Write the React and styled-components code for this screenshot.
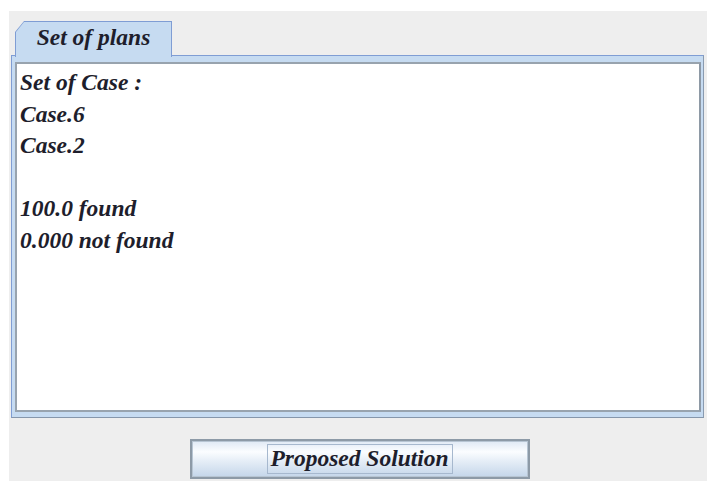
import React from "react";
import styled, { createGlobalStyle } from "styled-components";

const serif = `"Liberation Serif", "DejaVu Serif", "Times New Roman", serif`;

const GlobalStyle = createGlobalStyle`
  html, body {
    margin: 0;
    padding: 0;
    background: #ffffff;
  }
  body {
    font-family: ${serif};
  }
`;

const Window = styled.div`
  margin: 11px 0 0 9px;
  height: 470px;
  background: #eeeeee;
  display: flex;
  flex-direction: column;
  overflow: hidden;
`;

const TabRow = styled.div`
  display: flex;
  padding: 10px 0 0 6px;
  position: relative;
  z-index: 2;
  margin-bottom: -2px;
`;

// outer shape gives the border colour, inner face sits 1px inside it
const TabEdge = styled.div`
  background: #7f9dd4;
  padding: 1px 1px 0 1px;
  clip-path: polygon(9px 0, 100% 0, 100% 100%, 0 100%, 0 11px);
`;

const TabFace = styled.div`
  background: #c6dbf1;
  height: 35px;
  width: 155px;
  box-sizing: border-box;
  clip-path: polygon(8px 0, 100% 0, 100% 100%, 0 100%, 0 10px);
  display: flex;
  align-items: center;
  justify-content: center;
  font-family: ${serif};
  font-size: 23.5px;
  font-weight: bold;
  font-style: italic;
  color: #1e1e2c;
  padding-bottom: 5px;
`;

const Panel = styled.div`
  margin: 0 3px 0 2px;
  height: 363px;
  box-sizing: border-box;
  border-style: solid;
  border-width: 1px;
  border-color: #7f9dd4 #8a9bb0 #8596ab #7f9dd4;
  background: #c6dbf1;
  padding: 6px 2px 5px 3px;
  display: flex;
`;

const TextArea = styled.div`
  flex: 1;
  background: #ffffff;
  border: 2px solid #98a3ae;
  border-right-color: #8e99a5;
  padding: 3px 3px;
  font-family: ${serif};
  font-size: 23.5px;
  font-weight: bold;
  font-style: italic;
  line-height: 31.5px;
  color: #1e1e2c;
`;

const Line = styled.div`
  height: 31.5px;
  white-space: pre;
`;

const ButtonRow = styled.div`
  display: flex;
  justify-content: center;
  padding: 21px 0 0 4px;
`;

const Button = styled.button`
  width: 340px;
  height: 40px;
  box-sizing: border-box;
  border: 2px solid #8d9aa7;
  box-shadow: inset 0 0 0 1px #b7c5d3;
  background: linear-gradient(
    to bottom,
    #dfe9f5 0%,
    #fbfdff 30%,
    #e6eef7 55%,
    #c4d6ea 100%
  );
  display: flex;
  align-items: center;
  justify-content: center;
  padding: 0;
  font-family: ${serif};
  font-size: 23.5px;
  font-weight: bold;
  font-style: italic;
  color: #1e1e2c;
`;

const Focus = styled.span`
  border: 1px solid #a6b8ce;
  padding: 0 3px 1px 2px;
  line-height: 27px;
`;

const lines = ["Set of Case :", "Case.6", "Case.2", "", "100.0 found", "0.000 not found"];

export default function App() {
  return (
    <>
      <GlobalStyle />
      <Window>
        <TabRow>
          <TabEdge>
            <TabFace>Set of plans</TabFace>
          </TabEdge>
        </TabRow>
        <Panel>
          <TextArea>
            {lines.map((text, i) => (
              <Line key={i}>{text}</Line>
            ))}
          </TextArea>
        </Panel>
        <ButtonRow>
          <Button>
            <Focus>Proposed Solution</Focus>
          </Button>
        </ButtonRow>
      </Window>
    </>
  );
}
